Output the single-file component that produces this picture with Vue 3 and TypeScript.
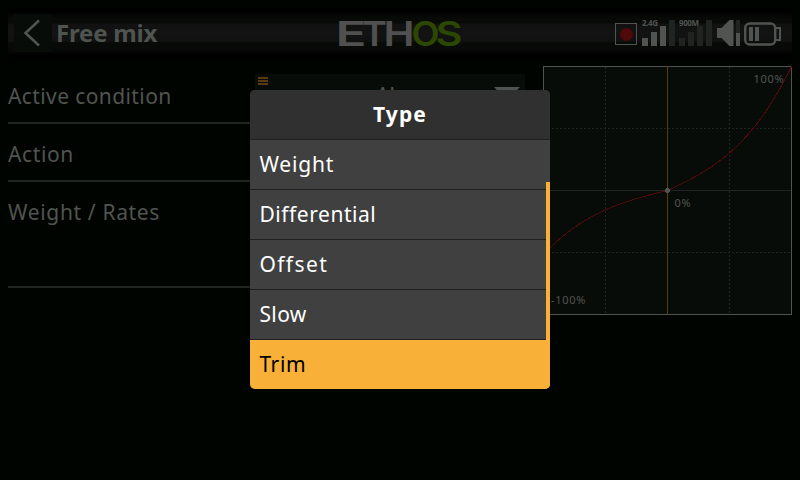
<script setup lang="ts">
interface Label { label: string; tracking: number }
interface Row extends Label { tall?: boolean }

const rows: Row[] = [
  { label: 'Active condition', tracking: 0.4 },
  { label: 'Action', tracking: 0.6 },
  { label: 'Weight / Rates', tracking: 0.65, tall: true },
]
const options: Label[] = [
  { label: 'Weight', tracking: 0.8 },
  { label: 'Differential', tracking: 0.55 },
  { label: 'Offset', tracking: 1.4 },
  { label: 'Slow', tracking: 0.4 },
  { label: 'Trim', tracking: 0.6 },
]
const selected = 'Trim'

// Expo response curve, with a lower weight on the negative side
const curve: string = Array.from({ length: 249 }, (_, x) => {
  const t = (x - 124) / 124
  const weight = t < 0 ? 0.515 : 1
  const y = 124 - 124 * weight * (0.477 * t + 0.523 * t ** 3)
  return `${x + 0.5},${(y + 0.5).toFixed(2)}`
}).join(' ')
</script>

<template>
  <div class="screen">
    <header class="topbar">
      <div class="back">
        <svg width="38" height="38" viewBox="0 0 38 38"><path d="M25 6.5 11.5 19 25 31.5" fill="none" stroke="#505450" stroke-width="2.6" /></svg>
      </div>
      <h1 class="title">Free mix</h1>
      <svg class="logo" width="140" height="50" viewBox="0 0 140 50">
        <g fill="#505050">
          <text x="5.5" y="38" textLength="31" lengthAdjust="spacingAndGlyphs">E</text>
          <text x="32" y="38" textLength="25" lengthAdjust="spacingAndGlyphs">T</text>
          <text x="53.5" y="38" textLength="31" lengthAdjust="spacingAndGlyphs">H</text>
        </g>
        <g fill="#2c4800">
          <text x="81.5" y="38" textLength="28" lengthAdjust="spacingAndGlyphs">O</text>
          <text x="105.5" y="38" textLength="27" lengthAdjust="spacingAndGlyphs">S</text>
        </g>
      </svg>
      <svg class="status" width="177" height="36" viewBox="0 0 177 36">
        <rect x="10.5" y="8.5" width="21" height="21" fill="none" stroke="#505450" />
        <circle cx="21.5" cy="19.5" r="6.5" fill="#500808" />
        <g fill="#202420">
          <rect x="64" y="5" width="6" height="26" />
          <rect x="74" y="23" width="6" height="8" />
          <rect x="83" y="17" width="6" height="14" />
          <rect x="92" y="11" width="6" height="20" />
          <rect x="101" y="5" width="6" height="26" />
          <rect x="131" y="5" width="4" height="26" />
        </g>
        <g fill="#505450">
          <rect x="37" y="23" width="6" height="8" />
          <rect x="46" y="17" width="6" height="14" />
          <rect x="55" y="11" width="6" height="20" />
          <path d="M112 13h4.500l8-8h4v26h-4l-8-8h-4.500z" />
          <rect x="131" y="18" width="4" height="13" />
          <rect x="144" y="12" width="4" height="14" />
          <rect x="150" y="12" width="4" height="14" />
        </g>
        <rect x="140.2" y="8.500" width="30" height="21" rx="4.500" fill="none" stroke="#505450" stroke-width="2.4" />
        <path d="M171 13h4v12h-4" fill="none" stroke="#505450" stroke-width="2" />
        <text x="37" y="11" textLength="16">2.4G</text>
        <text x="74" y="11" textLength="20">900M</text>
      </svg>
    </header>

    <main class="content">
      <section class="form">
        <div v-for="row in rows" :key="row.label" class="row" :class="{ tall: row.tall }">
          <span :style="{ letterSpacing: row.tracking + 'px' }">{{ row.label }}</span>
          <div v-if="row.label === 'Active condition'" class="dropdown">
            <svg width="10" height="8" viewBox="0 0 10 8"><path d="M0 1h10M0 4h10M0 7h10" stroke="#583c10" stroke-width="2" /></svg>
            <span class="value">Always on</span>
            <svg class="arrow" width="26" height="14" viewBox="0 0 26 14"><path d="M0 0h26L13 14z" fill="#505450" /></svg>
          </div>
        </div>
      </section>

      <svg class="chart" width="249" height="249" viewBox="0 0 249 249" shape-rendering="crispEdges">
        <rect x=".5" y=".5" width="248" height="248" fill="#080c08" stroke="#505450" />
        <path d="M62.5 1v247M186.5 1v247M1 62.5h247M1 186.5h247" stroke="#202420" stroke-dasharray="2 2" />
        <path d="M1 124.5h247" stroke="#202420" />
        <path d="M124.5 0v249" stroke="#583c10" />
        <polyline :points="curve" fill="none" stroke="#500808" />
        <circle cx="124.5" cy="124.5" r="2.5" fill="#505450" />
        <text x="210.5" y="17">100%</text>
        <text x="131.5" y="141">0%</text>
        <text x="8" y="238">-100%</text>
      </svg>
    </main>

    <div class="dialog">
      <h2>Type</h2>
      <ul>
        <li
          v-for="option in options"
          :key="option.label"
          :class="{ selected: option.label === selected }"
          :style="{ letterSpacing: option.tracking + 'px' }"
        >{{ option.label }}</li>
      </ul>
      <i class="scrollbar"></i>
    </div>
  </div>
</template>

<style>
body { background: #000400; overflow: hidden; }
</style>

<style scoped>
.screen {
  position: relative;
  box-sizing: border-box;
  width: 800px;
  height: 480px;
  padding: 8px 8px 0;
  overflow: hidden;
  background: #000400;
  color: #505450;
  font-family: "Noto Sans", "Open Sans", sans-serif;
}
.topbar {
  display: flex;
  align-items: center;
  height: 50px;
  background: linear-gradient(#000000 0 4px, #040604 7px, #080a08 10px, #080a08 15px, #101110 16px, #121312 26px, #101110 33px, #080a08 35px, #080a08 41px, #000000 47px);
}
.back {
  width: 38px;
  height: 38px;
  margin-left: 6px;
  background: #080c08;
}
.back svg { display: block; }
.title {
  width: 274px;
  margin: 0 0 0 4px;
  font-size: 24px;
  font-weight: 700;
  letter-spacing: -0.2px;
  line-height: 50px;
}
.logo { flex: none; font: 600 34px Inter, "Liberation Sans", sans-serif; }
.status { margin-left: 135px; flex: none; }
.status text { fill: #505450; font-size: 8px; font-weight: 700; }
.content { display: flex; height: 264px; }
.form { width: 517px; padding-top: 8px; }
.row {
  display: flex;
  justify-content: space-between;
  box-sizing: border-box;
  height: 58px;
  border-bottom: 2px solid #202420;
  font-size: 21px;
  line-height: 60px;
}
.row.tall { height: 106px; }
.dropdown {
  display: flex;
  box-sizing: border-box;
  width: 270px;
  height: 42px;
  margin-top: 8px;
  padding: 3px 5px 0 3px;
  background: #080c08;
  line-height: 37px;
}
.value { flex: 1; padding-left: 108px; white-space: nowrap; }
.arrow { margin-top: 10px; }
.chart { margin: 8px 0 0 18px; flex: none; }
.chart text { fill: #505450; font-size: 11px; letter-spacing: 0.7px; }
.dialog {
  position: absolute;
  left: 250px;
  top: 90px;
  width: 300px;
  height: 299px;
  overflow: hidden;
  border-radius: 5px;
  background: #404040;
  color: #fff;
  font-size: 21px;
}
.dialog h2 {
  height: 49px;
  margin: 0;
  background: #303030;
  font-size: 21px;
  letter-spacing: 1.1px;
  line-height: 49px;
  text-align: center;
}
.dialog ul { margin: 0; padding: 0; list-style: none; }
.dialog li {
  box-sizing: border-box;
  height: 50px;
  padding-left: 9.4px;
  border-top: 1px solid #202020;
  line-height: 49px;
}
.dialog li.selected { background: #f8b038; color: #000; }
.scrollbar {
  position: absolute;
  right: 0;
  top: 92px;
  width: 4px;
  height: 207px;
  background: #f8b038;
}
</style>
